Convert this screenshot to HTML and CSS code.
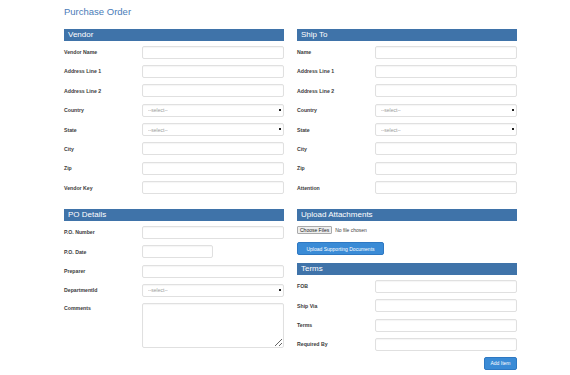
FILE: index.html
```html
<!DOCTYPE html>
<html lang="en">
<head>
  <meta charset="UTF-8">
  <title>Purchase Order</title>
  <link rel="stylesheet" href="styles.css">
</head>
<body>
  <div class="page">
    <h1 class="title">Purchase Order</h1>

    <div class="cols">
      <div class="col">
        <div class="section">
          <h2 class="head">Vendor</h2>
          <div class="row"><label>Vendor Name</label><input type="text"></div>
          <div class="row"><label>Address Line 1</label><input type="text"></div>
          <div class="row"><label>Address Line 2</label><input type="text"></div>
          <div class="row"><label>Country</label><span class="sel"><select><option>--select--</option></select></span></div>
          <div class="row"><label>State</label><span class="sel"><select><option>--select--</option></select></span></div>
          <div class="row"><label>City</label><input type="text"></div>
          <div class="row"><label>Zip</label><input type="text"></div>
          <div class="row"><label>Vendor Key</label><input type="text"></div>
        </div>

        <div class="section">
          <h2 class="head">PO Details</h2>
          <div class="row"><label>P.O. Number</label><input type="text"></div>
          <div class="row"><label>P.O. Date</label><input type="text" class="short"></div>
          <div class="row"><label>Preparer</label><input type="text"></div>
          <div class="row"><label>DepartmentId</label><span class="sel"><select><option>--select--</option></select></span></div>
          <div class="row top"><label>Comments</label><textarea></textarea></div>
        </div>
      </div>

      <div class="col">
        <div class="section">
          <h2 class="head">Ship To</h2>
          <div class="row"><label>Name</label><input type="text"></div>
          <div class="row"><label>Address Line 1</label><input type="text"></div>
          <div class="row"><label>Address Line 2</label><input type="text"></div>
          <div class="row"><label>Country</label><span class="sel"><select><option>--select--</option></select></span></div>
          <div class="row"><label>State</label><span class="sel"><select><option>--select--</option></select></span></div>
          <div class="row"><label>City</label><input type="text"></div>
          <div class="row"><label>Zip</label><input type="text"></div>
          <div class="row"><label>Attention</label><input type="text"></div>
        </div>

        <div class="section upload">
          <h2 class="head">Upload Attachments</h2>
          <div class="file"><span class="file-btn">Choose Files</span><span class="file-txt">No file chosen</span></div>
          <button class="btn">Upload Supporting Documents</button>
        </div>

        <div class="section">
          <h2 class="head">Terms</h2>
          <div class="row"><label>FOB</label><input type="text"></div>
          <div class="row"><label>Ship Via</label><input type="text"></div>
          <div class="row"><label>Terms</label><input type="text"></div>
          <div class="row"><label>Required By</label><input type="text"></div>
          <div class="actions"><button class="btn add">Add Item</button></div>
        </div>
      </div>
    </div>
  </div>
</body>
</html>
```

FILE: styles.css
```css
* { box-sizing: border-box; }
body { margin: 0; background: #fff; font-family: "Liberation Sans", Arial, sans-serif; color: #333; }

.page { padding: 6px 0 0 64px; width: 517px; }
.title { margin: 0 0 11px; font-size: 9.5px; line-height: 12px; font-weight: normal; color: #4a7cb8; }

.cols { display: grid; grid-template-columns: 220px 220px; column-gap: 13px; }

.section { margin-bottom: 15px; }
.head {
  margin: 0 0 4.5px;
  height: 12px;
  padding-left: 4px;
  background: #3f73a9;
  color: #fff;
  font-size: 8px;
  line-height: 12px;
  font-weight: normal;
}

.row { display: flex; align-items: center; height: 13px; margin-bottom: 6.4px; }
.row.top { align-items: flex-start; height: auto; }
.row label { width: 78px; flex: none; font-size: 5.2px; font-weight: bold; color: #3a3a3a; }
.row.top label { padding-top: 2px; }

input[type=text], textarea, select {
  width: 142px;
  height: 13px;
  border: 1px solid #e0e0e0;
  border-radius: 2px;
  box-shadow: inset 0 1px 1px rgba(0,0,0,.04);
  background: #fff;
  font: 5px "Liberation Sans", Arial, sans-serif;
  padding: 0 5px;
}
input.short { width: 71px; }
textarea { height: 45px; resize: vertical; }

.sel { position: relative; display: block; width: 142px; }
.sel select { -webkit-appearance: none; appearance: none; color: #999; display: block; }
.sel::after {
  content: "";
  position: absolute;
  right: 3px;
  top: 5px;
  width: 2px;
  height: 2px;
  background: #222;
}

.upload { margin-bottom: 8px; }
.file { display: flex; align-items: center; height: 8px; margin-top: 5px; font-size: 5px; }
.file-btn {
  height: 8px;
  padding: 0 2px;
  line-height: 6px;
  border: 1px solid #aaa;
  border-radius: 1px;
  background: #eee;
  color: #222;
}
.file-txt { margin-left: 3px; color: #444; }

.btn {
  margin-top: 8px;
  height: 13px;
  padding: 0 4px;
  border: 1px solid #2e78c2;
  border-radius: 2px;
  background: #3a8bd6;
  color: #fff;
  font: 5px "Liberation Sans", Arial, sans-serif;
  width: 87px;
}
.actions { display: flex; justify-content: flex-end; margin-top: -0.4px; }
.btn.add { margin-top: 0; width: 33px; }
```
